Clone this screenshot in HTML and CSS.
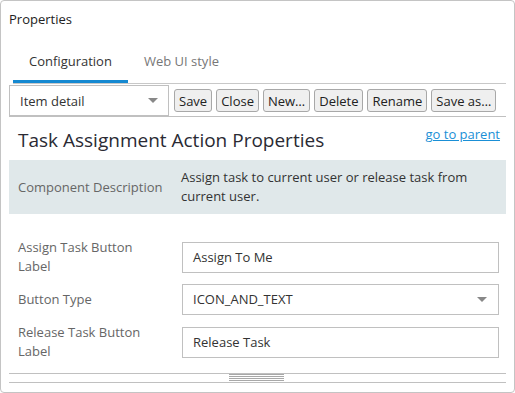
FILE: index.html
```html
<!DOCTYPE html>
<html lang="en">

<head>
  <meta charset="UTF-8" />
  <meta name="viewport" content="width=device-width, initial-scale=1.0" />
  <title>Properties</title>
  <link rel="stylesheet" href="styles.css">
</head>

<body>
  <div class="panel">
    <div class="panel-title">Properties</div>

    <div class="tabs">
      <div class="tab active">Configuration</div>
      <div class="tab">Web UI style</div>
    </div>

    <div class="toolbar">
      <div class="select item-select">
        <span>Item detail</span>
        <span class="caret"></span>
      </div>
      <button class="btn">Save</button>
      <button class="btn">Close</button>
      <button class="btn">New…</button>
      <button class="btn">Delete</button>
      <button class="btn">Rename</button>
      <button class="btn">Save as…</button>
    </div>

    <div class="content">
      <div class="heading">
        <h2>Task Assignment Action Properties</h2>
        <a href="#" class="parent-link">go to parent</a>
      </div>

      <div class="desc-box">
        <div class="desc-label">Component Description</div>
        <div class="desc-text">Assign task to current user or release task from current user.</div>
      </div>

      <div class="form">
        <div class="form-row">
          <label class="form-label">Assign Task Button Label</label>
          <div class="field">Assign To Me</div>
        </div>
        <div class="form-row">
          <label class="form-label">Button Type</label>
          <div class="field select">
            <span>ICON_AND_TEXT</span>
            <span class="caret"></span>
          </div>
        </div>
        <div class="form-row">
          <label class="form-label">Release Task Button Label</label>
          <div class="field">Release Task</div>
        </div>
      </div>
    </div>

    <div class="splitter">
      <div class="grip"></div>
    </div>
  </div>
</body>

</html>
```

FILE: styles.css
```css
* {
  box-sizing: border-box;
}

body {
  margin: 0;
  font-family: 'Open Sans', 'Noto Sans', sans-serif;
  font-size: 13px;
  color: #333;
  background: #fff;
}

.panel {
  width: 515px;
  height: 393px;
  border: 1px solid #c4c4c4;
  border-radius: 4px;
  display: flex;
  flex-direction: column;
  overflow: hidden;
}

.panel-title {
  padding: 9px 8px 0;
  height: 40px;
  line-height: 18px;
  color: #222;
}

.tabs {
  display: flex;
  margin: 0 8px 0 12px;
  border-bottom: 1px solid #c8c8c8;
  height: 43px;
}

.tab {
  padding: 11px 16px 0;
  line-height: 18px;
  color: #777;
  border-bottom: 3px solid transparent;
}

.tab.active {
  color: #333;
  border-bottom-color: #1589d1;
}

.toolbar {
  display: flex;
  align-items: center;
  gap: 4px;
  margin: 1px 8px 0;
  height: 32px;
  border-bottom: 1px solid #c0c0c0;
}

.select {
  display: flex;
  align-items: center;
  justify-content: space-between;
  background: #fff;
  border: 1px solid #c0c0c0;
}

.item-select {
  width: 160px;
  height: 31px;
  padding: 0 10px;
  margin-right: 1px;
  flex-shrink: 0;
}

.caret {
  width: 0;
  height: 0;
  border-left: 5px solid transparent;
  border-right: 5px solid transparent;
  border-top: 5px solid #888;
}

.btn {
  font-family: inherit;
  font-size: 13px;
  color: #222;
  height: 23px;
  padding: 0 4px;
  background: #efefef;
  border: 1px solid #a8a8a8;
  border-radius: 3px;
  line-height: 20px;
  white-space: nowrap;
  flex-shrink: 0;
}

.content {
  flex: 1;
  margin: 0 8px;
  border-bottom: 1px solid #c0c0c0;
}

.heading {
  display: flex;
  justify-content: space-between;
  align-items: flex-start;
  padding: 0 6px 0 9px;
  height: 43px;
}

.heading h2 {
  margin: 10px 0 0;
  font-size: 19px;
  font-weight: normal;
  line-height: 26px;
  color: #2a2a33;
}

.parent-link {
  color: #1a8fd6;
  margin-top: 8px;
  line-height: 18px;
}

.desc-box {
  display: flex;
  align-items: center;
  background: #e0e8ea;
  height: 54px;
  padding: 0 9px;
}

.desc-label {
  width: 163px;
  color: #666;
}

.desc-text {
  flex: 1;
  line-height: 19px;
  padding-right: 10px;
}

.form {
  display: flex;
  flex-direction: column;
  gap: 8px;
  padding: 24px 7px 0 9px;
}

.form-row {
  display: flex;
  align-items: center;
  min-height: 31px;
}

.form-label {
  width: 164px;
  padding-right: 20px;
  line-height: 19px;
  color: #666;
}

.field {
  flex: 1;
  height: 31px;
  line-height: 29px;
  padding: 0 10px;
  border: 1px solid #c0c0c0;
  background: #fff;
}

.field.select .caret {
  margin-right: 1px;
}

.splitter {
  margin: 0 8px 9px;
  height: 9px;
  border-bottom: 1px solid #c0c0c0;
  display: flex;
  justify-content: center;
}

.grip {
  width: 55px;
  height: 8px;
  margin-right: 2px;
  background: repeating-linear-gradient(to bottom, #a8a8a8 0, #a8a8a8 1px, transparent 1px, transparent 2px);
}
```
